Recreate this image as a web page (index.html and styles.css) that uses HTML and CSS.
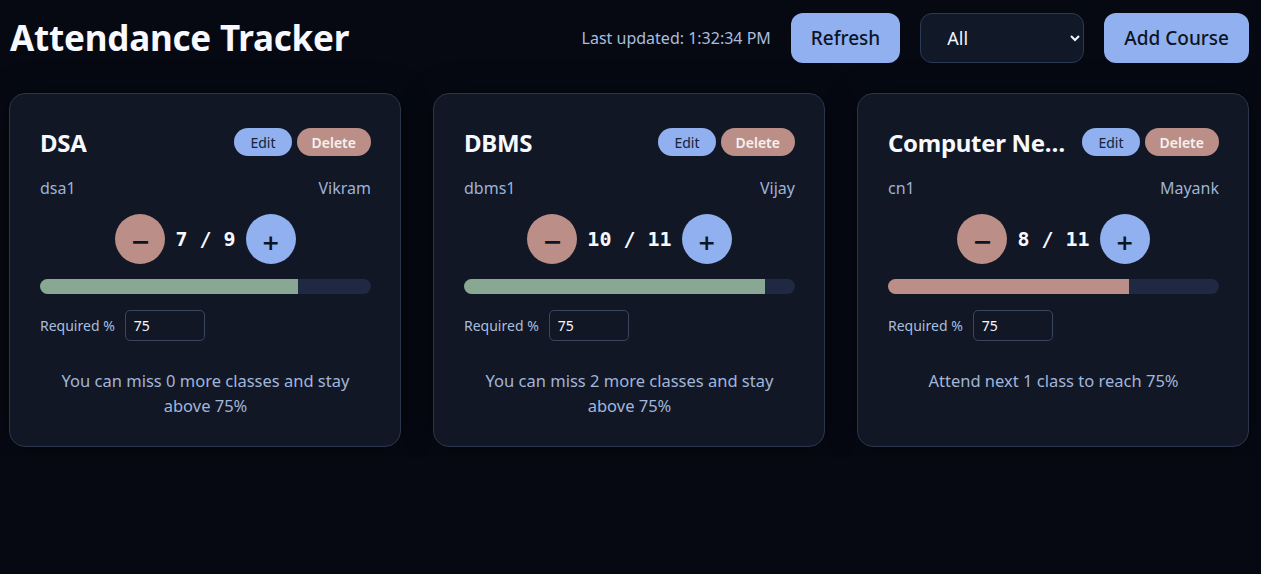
FILE: index.html
```html
<!DOCTYPE html>
<html lang="en">
<head>
<meta charset="utf-8">
<title>Attendance Tracker</title>
<link rel="stylesheet" href="styles.css">
</head>
<body>
<div class="app">
  <header class="topbar">
    <h1 class="title">Attendance Tracker</h1>
    <div class="actions">
      <span class="updated">Last updated: 1:32:34 PM</span>
      <button class="btn-primary">Refresh</button>
      <div class="select-wrap">
        <select class="filter"><option>All</option></select>
      </div>
      <button class="btn-primary">Add Course</button>
    </div>
  </header>

  <main class="grid">
    <section class="card">
      <div class="card-head">
        <h2 class="course">DSA</h2>
        <div class="card-btns">
          <button class="pill pill-edit">Edit</button>
          <button class="pill pill-del">Delete</button>
        </div>
      </div>
      <div class="meta"><span>dsa1</span><span>Vikram</span></div>
      <div class="counter">
        <button class="round round-minus">−</button>
        <span class="count">7 / 9</span>
        <button class="round round-plus">+</button>
      </div>
      <div class="bar"><div class="fill fill-ok" style="width:77.8%"></div></div>
      <div class="req"><label>Required %</label><input class="req-input" value="75"></div>
      <p class="msg">You can miss 0 more classes and stay above 75%</p>
    </section>

    <section class="card">
      <div class="card-head">
        <h2 class="course">DBMS</h2>
        <div class="card-btns">
          <button class="pill pill-edit">Edit</button>
          <button class="pill pill-del">Delete</button>
        </div>
      </div>
      <div class="meta"><span>dbms1</span><span>Vijay</span></div>
      <div class="counter">
        <button class="round round-minus">−</button>
        <span class="count">10 / 11</span>
        <button class="round round-plus">+</button>
      </div>
      <div class="bar"><div class="fill fill-ok" style="width:90.9%"></div></div>
      <div class="req"><label>Required %</label><input class="req-input" value="75"></div>
      <p class="msg">You can miss 2 more classes and stay above 75%</p>
    </section>

    <section class="card">
      <div class="card-head">
        <h2 class="course">Computer Networks</h2>
        <div class="card-btns">
          <button class="pill pill-edit">Edit</button>
          <button class="pill pill-del">Delete</button>
        </div>
      </div>
      <div class="meta"><span>cn1</span><span>Mayank</span></div>
      <div class="counter">
        <button class="round round-minus">−</button>
        <span class="count">8 / 11</span>
        <button class="round round-plus">+</button>
      </div>
      <div class="bar"><div class="fill fill-low" style="width:72.7%"></div></div>
      <div class="req"><label>Required %</label><input class="req-input" value="75"></div>
      <p class="msg">Attend next 1 class to reach 75%</p>
    </section>
  </main>
</div>
</body>
</html>
```

FILE: styles.css
```css
* { box-sizing: border-box; }
html, body { margin: 0; padding: 0; }
body {
  background: #060912;
  color: #f3f6fc;
  font-family: "Noto Sans", "Open Sans", sans-serif;
}
.app { padding: 12px 12px 10px 9px; }

.topbar {
  display: flex;
  align-items: center;
  justify-content: space-between;
  height: 51px;
}
.title {
  margin: 0 0 0 1px;
  font-size: 35px;
  font-weight: 700;
  color: #f7f9ff;
  letter-spacing: -0.2px;
}
.actions {
  display: flex;
  align-items: center;
  gap: 20px;
}
.updated {
  font-size: 16px;
  color: #a9bddf;
}
.btn-primary {
  height: 50px;
  padding: 0 20px;
  border: none;
  border-radius: 12px;
  background: #91b0ef;
  color: #0c1526;
  font-family: inherit;
  font-size: 19px;
  font-weight: 500;
}
.select-wrap { display: flex; }
.filter {
  width: 164px;
  height: 50px;
  border-radius: 12px;
  border: 1px solid #2d3a55;
  background: #111827;
  color: #f3f6fc;
  font-family: inherit;
  font-size: 18px;
  padding: 0 20px 0 22px;
}

.grid {
  display: grid;
  grid-template-columns: repeat(3, minmax(0, 1fr));
  gap: 32px;
  margin-top: 30px;
}
.card {
  min-width: 0;
  background: #111724;
  border: 1px solid #2b364d;
  border-radius: 16px;
  padding: 30px 29px 28px 30px;
  box-shadow: 0 0 30px rgba(0,0,0,0.35);
}
.card-head {
  display: flex;
  align-items: center;
  justify-content: space-between;
  gap: 14px;
  height: 36px;
}
.course {
  margin: 0;
  font-size: 24px;
  font-weight: 700;
  color: #f7f9ff;
  letter-spacing: -0.3px;
  white-space: nowrap;
  overflow: hidden;
  text-overflow: ellipsis;
  min-width: 0;
}
.card-btns { display: flex; gap: 5px; flex-shrink: 0; }
.pill {
  height: 28px;
  border: none;
  border-radius: 14px;
  font-family: inherit;
  font-size: 14px;
  padding: 0 16px;
}
.pill-edit { background: #91b0ef; color: #14213a; }
.pill-del { background: #bb8f88; color: #f6f1f0; font-weight: 600; padding: 0 15px; }

.meta {
  display: flex;
  justify-content: space-between;
  margin-top: 16px;
  font-size: 16px;
  line-height: 24px;
  color: #9fb2d6;
}
.counter {
  display: flex;
  align-items: center;
  justify-content: center;
  gap: 10px;
  margin-top: 14px;
}
.round {
  width: 50px;
  height: 50px;
  border-radius: 50%;
  border: none;
  font-family: "DejaVu Sans", sans-serif;
  font-size: 22px;
  font-weight: 700;
  color: #0c1526;
  padding: 6px 0 0;
}
.round-minus { background: #bb8f88; font-size: 24px; font-weight: 900; }
.round-plus { background: #91b0ef; }
.count {
  font-family: "DejaVu Sans Mono", monospace;
  font-size: 20px;
  font-weight: 700;
  color: #f7f9ff;
  white-space: pre;
}
.bar {
  margin-top: 15px;
  height: 15px;
  border-radius: 8px;
  background: #1f2a42;
  overflow: hidden;
}
.fill { height: 100%; }
.fill-ok { background: #89a893; }
.fill-low { background: #bb8f88; }

.req {
  display: flex;
  align-items: center;
  gap: 10px;
  margin-top: 16px;
  font-size: 14px;
  color: #a9bddf;
}
.req-input {
  width: 80px;
  height: 31px;
  background: #111724;
  border: 1px solid #3a4660;
  border-radius: 5px;
  color: #f7f9ff;
  font-family: inherit;
  font-size: 14px;
  padding: 0 8px;
}
.msg {
  margin: 27px 0 0;
  text-align: center;
  font-size: 16.5px;
  line-height: 25px;
  color: #a2b5da;
  padding: 0 10px;
}
```
